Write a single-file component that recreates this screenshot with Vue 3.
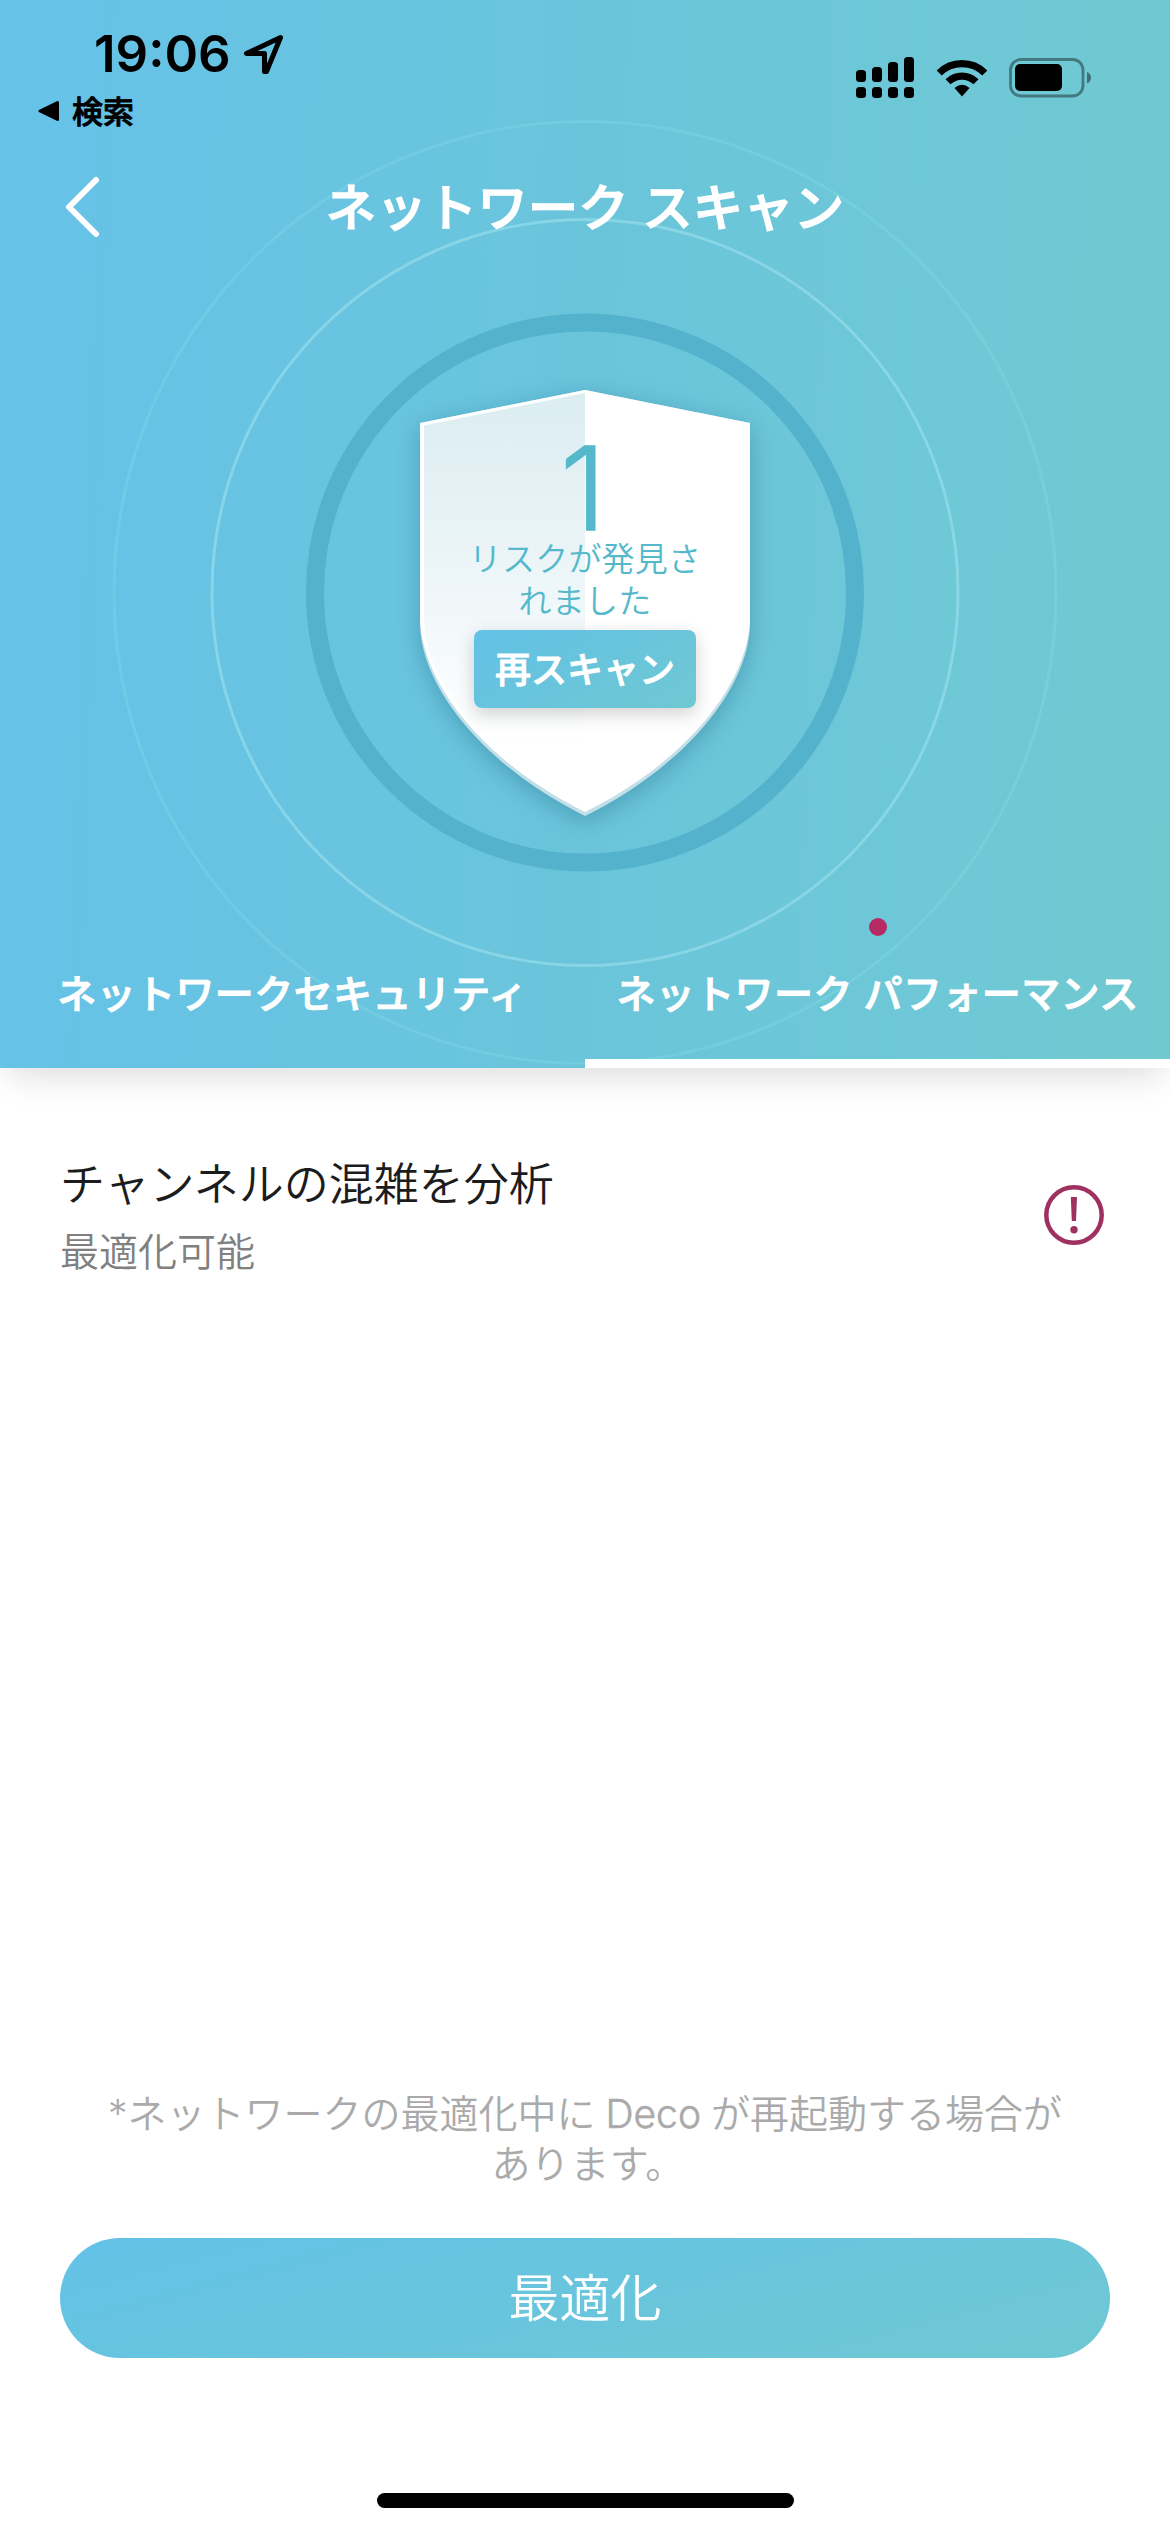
<script setup>
const signal = [
  { x: 0, y: 13, h: 12 },
  { x: 16, y: 10, h: 15 },
  { x: 32, y: 5, h: 20 },
  { x: 48, y: 0, h: 25 },
]
const tabs = [
  { label: 'ネットワークセキュリティ', active: false, alert: false },
  { label: 'ネットワーク パフォーマンス', active: true, alert: true },
]
</script>

<template>
  <div class="screen">
    <header class="hero">
      <svg class="rings" viewBox="0 0 1170 1068" fill="none">
        <circle cx="585" cy="592.5" r="471" stroke="#8be3ea" stroke-opacity=".26" stroke-width="3" />
        <circle cx="585" cy="592.5" r="373" stroke="#98deeb" stroke-opacity=".65" stroke-width="3" />
        <circle cx="585" cy="592.5" r="270" stroke="#55b2cd" stroke-width="18" />
      </svg>

      <div class="status">
        <div class="status-left">
          <div class="clock">
            <span class="time">19:06</span>
            <svg width="44" height="44" viewBox="0 0 44 44" fill="none" stroke="#000" stroke-width="5" stroke-linejoin="round">
              <path d="M38.500 5.500 L4.500 21.500 H22.500 V39.500 H24.500 Z" />
            </svg>
          </div>
          <div class="return">
            <svg width="22" height="22" viewBox="0 0 22 22">
              <path d="M2 11 L19.500 2.500 V19.500 Z" stroke="#000" stroke-width="3" stroke-linejoin="round" />
            </svg>
            <span>検索</span>
          </div>
        </div>
        <div class="status-right">
          <svg width="58" height="42" viewBox="0 0 58 42">
            <g v-for="b in signal" :key="b.x">
              <rect :x="b.x" :y="b.y" width="10" :height="b.h" rx="3.500" />
              <rect :x="b.x" y="30" width="10" height="11" rx="3.500" />
            </g>
          </svg>
          <svg class="wifi" width="52" height="38" viewBox="0 0 52 38">
            <g fill="none" stroke="#000" stroke-width="7.200">
              <path d="M3.200 14 A32.500 32.500 0 0 1 48.800 14" />
              <path d="M12 22.800 A20 20 0 0 1 40 22.800" />
            </g>
            <path d="M18.500 29 Q26 22.500 33.500 29 L26 37.500 Z" />
          </svg>
          <svg class="battery" width="84" height="40" viewBox="0 0 84 40">
            <rect x="1.500" y="1.500" width="72.500" height="36.500" rx="10.500" fill="none" stroke="#000" stroke-opacity=".4" stroke-width="2.800" />
            <rect x="6" y="6" width="47" height="27" rx="5" />
            <path d="M78 14 Q82 16 82 19.500 Q82 23.500 78 25.500 Z" fill-opacity=".45" />
          </svg>
        </div>
      </div>

      <nav class="nav">
        <svg class="back" width="40" height="66" viewBox="0 0 40 66" fill="none" stroke="#fff" stroke-width="6" stroke-linecap="round" stroke-linejoin="round">
          <path d="M33 6 L6 33 L33 60" />
        </svg>
        <h1>ネットワーク スキャン</h1>
      </nav>

      <section class="shield">
        <svg class="shield-shape" viewBox="0 0 330 426">
          <defs>
            <linearGradient id="tint" x1="0" y1="0" x2="0" y2="1">
              <stop offset="0" stop-color="#dbedf1" />
              <stop offset=".5" stop-color="#ecf5f8" />
              <stop offset="1" stop-color="#fff" />
            </linearGradient>
          </defs>
          <path d="M165 0 L330 33 V233 C330 295 268 375 165 426 C62 375 0 295 0 233 V33 Z" fill="#c3dfe7" />
          <path d="M165 0 L330 33 V226 C330 291 268 371 165 422 C62 371 0 291 0 226 V33 Z" fill="#fff" />
          <path d="M165 3 L4 35.500 V226 C4 280 42 325 72 352 H165 Z" fill="url(#tint)" />
        </svg>
        <div class="count">1</div>
        <p class="found">リスクが発見さ<br>れました</p>
        <button class="rescan">再スキャン</button>
      </section>

      <div class="tabs">
        <div v-for="t in tabs" :key="t.label" class="tab" :class="{ active: t.active }">
          <span>{{ t.label }}</span>
          <i v-if="t.alert" class="dot"></i>
        </div>
      </div>
    </header>

    <main class="body">
      <div class="item">
        <div>
          <div class="item-title">チャンネルの混雑を分析</div>
          <div class="item-sub">最適化可能</div>
        </div>
        <svg class="warn" width="60" height="60" viewBox="0 0 60 60">
          <circle cx="30" cy="30" r="27.700" fill="none" stroke="#9f3160" stroke-width="4.500" />
          <path d="M26.800 12 H33 L32 36 H27.800 Z" fill="#9f3160" />
          <circle cx="30" cy="44.800" r="3.700" fill="#9f3160" />
        </svg>
      </div>
    </main>

    <footer class="foot">
      <p class="note">*ネットワークの最適化中に<span class="latin">Deco</span>が再起動する場合が<br><span class="note-end">あります。</span></p>
      <button class="optimize">最適化</button>
      <div class="home"></div>
    </footer>
  </div>
</template>

<style>
body {
  margin: 0;
  background: #fff;
}
</style>

<style scoped>
.screen {
  width: 1170px;
  height: 2532px;
  display: flex;
  flex-direction: column;
  overflow: hidden;
  background: #fff;
  font-family: Inter, "Noto Sans CJK JP", sans-serif;
}
button {
  border: 0;
  padding: 0;
  font-family: inherit;
  color: #fff;
}
p,
h1 {
  margin: 0;
}
.hero {
  position: relative;
  z-index: 0;
  height: 1068px;
  flex: none;
  display: flex;
  flex-direction: column;
  background: linear-gradient(92deg, #66c2e8 0%, #6ac5db 50%, #6ec8d6 82%, #70c9cf 100%);
  box-shadow: 0 14px 34px -8px rgba(0, 0, 0, 0.15);
}
.rings {
  position: absolute;
  inset: 0;
  z-index: -1;
  width: 1170px;
  height: 1068px;
}
.status {
  height: 150px;
  flex: none;
  display: flex;
  justify-content: space-between;
}
.status-left {
  padding: 32px 0 0 38px;
}
.clock {
  display: flex;
  align-items: center;
  gap: 11px;
  height: 44px;
  padding-left: 56px;
}
.time {
  font-size: 51px;
  font-weight: 600;
  line-height: 44px;
}
.return {
  display: flex;
  align-items: center;
  gap: 12px;
  height: 36px;
  margin-top: 17px;
  font-size: 31px;
  font-weight: 500;
  line-height: 36px;
}
.return span {
  padding-top: 1px;
  -webkit-text-stroke: 0.8px currentColor;
}
.status-right {
  display: flex;
  align-items: flex-start;
  padding: 57px 77px 0 0;
}
.wifi {
  margin: 2px 0 0 22px;
}
.battery {
  margin: 1px 0 0 21px;
}
.nav {
  position: relative;
  height: 114px;
  flex: none;
  display: flex;
  align-items: center;
  justify-content: center;
}
.back {
  position: absolute;
  left: 63px;
  top: 24px;
}
h1 {
  padding-top: 2px;
  color: #fff;
  font-size: 50.5px;
  font-weight: 500;
  line-height: 60px;
  -webkit-text-stroke: 1.3px currentColor;
}
.shield {
  position: relative;
  z-index: 0;
  width: 330px;
  height: 426px;
  margin: 126px auto 0;
  flex: none;
  display: flex;
  flex-direction: column;
  align-items: center;
  color: #55b9cb;
}
.shield-shape {
  position: absolute;
  inset: 0;
  z-index: -1;
  width: 330px;
  height: 426px;
  overflow: visible;
  filter: drop-shadow(0 6px 12px rgba(20, 90, 120, 0.35));
}
.count {
  margin-top: 49px;
  height: 99px;
  padding-right: 4px;
  font-size: 116px;
  font-weight: 300;
  line-height: 99px;
  -webkit-text-stroke: 1.5px currentColor;
}
.found {
  font-size: 33px;
  font-weight: 350;
  letter-spacing: 0.2px;
  line-height: 42px;
  text-align: center;
}
.rescan {
  width: 222px;
  height: 78px;
  margin-top: 8px;
  border-radius: 8px;
  background: linear-gradient(150deg, #62c1e6, #6fc8d2);
  box-shadow: 0 6px 18px rgba(0, 0, 0, 0.18);
  font-size: 36px;
  font-weight: 500;
  line-height: 80px;
  -webkit-text-stroke: 0.9px currentColor;
}
.tabs {
  flex: 1;
  display: flex;
  align-items: flex-end;
}
.tab {
  position: relative;
  box-sizing: border-box;
  width: 585px;
  height: 108px;
  border-bottom: 9px solid transparent;
  color: #fff;
  font-size: 39px;
  font-weight: 500;
  letter-spacing: 0.4px;
  line-height: 68px;
  text-align: center;
  white-space: nowrap;
  -webkit-text-stroke: 1px currentColor;
}
.tab.active {
  border-bottom-color: #fff;
}
.dot {
  position: absolute;
  left: 284px;
  top: -42px;
  width: 18px;
  height: 18px;
  border-radius: 50%;
  background: #b52a63;
}
.body {
  flex: 1;
  padding: 85px 66px 0 60px;
}
.item {
  display: flex;
  justify-content: space-between;
}
.item-title {
  padding-top: 2px;
  color: #1c1c1c;
  font-size: 45px;
  font-weight: 350;
  line-height: 60px;
}
.item-sub {
  margin-top: 10px;
  color: #808080;
  font-size: 39px;
  font-weight: 350;
  line-height: 54px;
}
.warn {
  margin-top: 32px;
}
.foot {
  display: flex;
  flex-direction: column;
  align-items: center;
}
.note {
  color: #aaa;
  font-size: 39px;
  font-weight: 350;
  line-height: 50px;
  text-align: center;
}
.latin {
  margin: 0 10px;
  -webkit-text-stroke: 0.6px currentColor;
}
.note-end {
  padding-left: 6px;
  letter-spacing: 0.4px;
}
.optimize {
  width: 1050px;
  height: 120px;
  margin-top: 49px;
  border-radius: 60px;
  background: linear-gradient(165deg, #63c2e7, #6fc8d2);
  font-size: 51px;
  font-weight: 350;
  line-height: 122px;
}
.home {
  width: 417px;
  height: 15px;
  margin: 135px 0 24px;
  border-radius: 8px;
  background: #000;
}
</style>
